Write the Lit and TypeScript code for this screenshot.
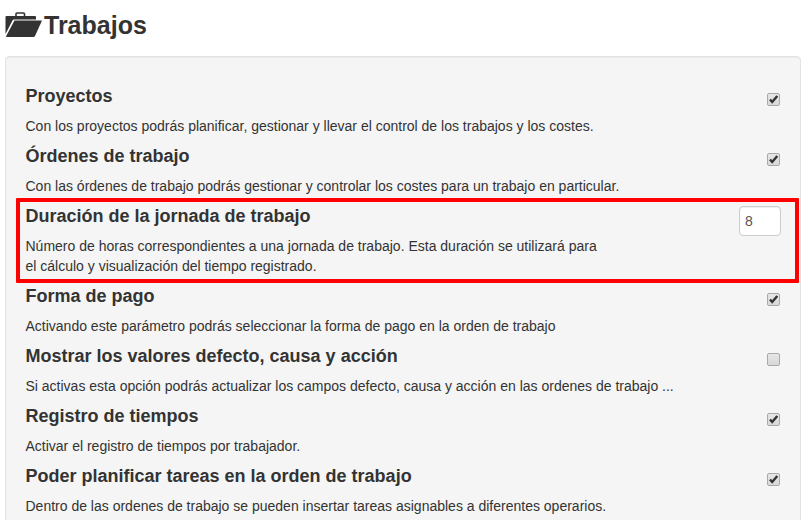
import { LitElement, html, css } from 'lit';
import { customElement } from 'lit/decorators.js';

type Row = { title: string; lines: string[]; checked?: boolean; input?: string; marked?: boolean };

const rows: Row[] = [
  {
    title: 'Proyectos',
    lines: ['Con los proyectos podrás planificar, gestionar y llevar el control de los trabajos y los costes.'],
    checked: true,
  },
  {
    title: 'Órdenes de trabajo',
    lines: ['Con las órdenes de trabajo podrás gestionar y controlar los costes para un trabajo en particular.'],
    checked: true,
  },
  {
    title: 'Duración de la jornada de trabajo',
    lines: [
      'Número de horas correspondientes a una jornada de trabajo. Esta duración se utilizará para',
      'el cálculo y visualización del tiempo registrado.',
    ],
    input: '8',
    marked: true,
  },
  {
    title: 'Forma de pago',
    lines: ['Activando este parámetro podrás seleccionar la forma de pago en la orden de trabajo'],
    checked: true,
  },
  {
    title: 'Mostrar los valores defecto, causa y acción',
    lines: ['Si activas esta opción podrás actualizar los campos defecto, causa y acción en las ordenes de trabajo ...'],
    checked: false,
  },
  {
    title: 'Registro de tiempos',
    lines: ['Activar el registro de tiempos por trabajador.'],
    checked: true,
  },
  {
    title: 'Poder planificar tareas en la orden de trabajo',
    lines: ['Dentro de las ordenes de trabajo se pueden insertar tareas asignables a diferentes operarios.'],
    checked: true,
  },
];

@customElement('app-root')
export class AppRoot extends LitElement {
  static styles = css`
    :host {
      display: block;
      height: 520px;
      overflow: hidden;
      background: #fff;
      color: #333;
      font-family: 'Liberation Sans', Arial, sans-serif;
    }

    .heading {
      display: flex;
      align-items: center;
      gap: 2px;
      height: 56px;
      padding-left: 5px;
      box-sizing: border-box;
      padding-bottom: 7px;
    }

    .heading svg {
      display: block;
      flex: none;
    }

    h1 {
      margin: 0;
      font-size: 25px;
      line-height: 30px;
      font-weight: bold;
    }

    .well {
      margin: 0 4px 0 5px;
      padding: 19px 19px 20px 19.5px;
      background: #f5f5f5;
      border: 1px solid #e3e3e3;
      border-radius: 4px;
      box-shadow: inset 0 1px 1px rgba(0, 0, 0, 0.05);
    }

    .row {
      position: relative;
      display: flex;
      justify-content: space-between;
      min-height: 60px;
    }

    .text h2 {
      margin: 0;
      height: 40px;
      font-size: 18px;
      line-height: 40px;
      font-weight: bold;
    }

    .text p {
      margin: 0;
      font-size: 14px;
      line-height: 20px;
    }

    .box {
      flex: none;
      width: 11px;
      height: 11px;
      margin: 17px 1px 0 0;
      border: 1px solid #a9a9a9;
      border-radius: 2px;
      background: linear-gradient(#e6e6e6, #d8d8d8);
      position: relative;
    }

    .box svg {
      position: absolute;
      left: 0;
      top: 0;
      display: block;
    }

    input {
      flex: none;
      width: 42px;
      height: 30px;
      box-sizing: border-box;
      margin: 10px 0 0;
      padding: 0 5px;
      border: 1px solid #ccc;
      border-radius: 4px;
      background: #fff;
      color: #555;
      font: 14px 'Liberation Sans', Arial, sans-serif;
      box-shadow: inset 0 1px 1px rgba(0, 0, 0, 0.075);
    }

    .mark {
      position: absolute;
      left: -9.5px;
      right: -18px;
      top: 2px;
      bottom: -7px;
      border: 4px solid #f00;
      border-radius: 1px;
      pointer-events: none;
    }
  `;

  renderControl(row: Row) {
    if (row.input) {
      return html`<input type="text" .value=${row.input} />`;
    }
    return html`<span class="box">
      ${row.checked
        ? html`<svg width="11" height="11" viewBox="0 0 11 11">
            <path d="M2 5.5 L4.2 8 L9.3 2" fill="none" stroke="#333" stroke-width="2.4" />
          </svg>`
        : ''}
    </span>`;
  }

  render() {
    return html`
      <div class="heading">
        <svg width="37" height="25" viewBox="0 0 37 25">
          <path d="M11 4 V2 Q11 1 12 1 H18.5 Q19.5 1 19.5 2 V4" fill="none" stroke="#333" stroke-width="1.6" />
          <path d="M0.5 22 V5 Q0.5 4 1.5 4 H30 Q31 4 31 5 V7.5 H9 Q8 7.5 7.5 8.5 Z" fill="#333" />
          <path d="M9.5 8.5 H37 L30 24 Q29.5 25 28.5 25 H1.5 Q0.8 25 1.2 24 Z" fill="#333" />
        </svg>
        <h1>Trabajos</h1>
      </div>
      <div class="well">
        ${rows.map(
          (row) => html`
            <div class="row">
              <div class="text">
                <h2>${row.title}</h2>
                <p>${row.lines.map((line, i) => html`${i ? html`<br />` : ''}${line}`)}</p>
              </div>
              ${this.renderControl(row)}
              ${row.marked ? html`<div class="mark"></div>` : ''}
            </div>
          `
        )}
      </div>
    `;
  }
}
